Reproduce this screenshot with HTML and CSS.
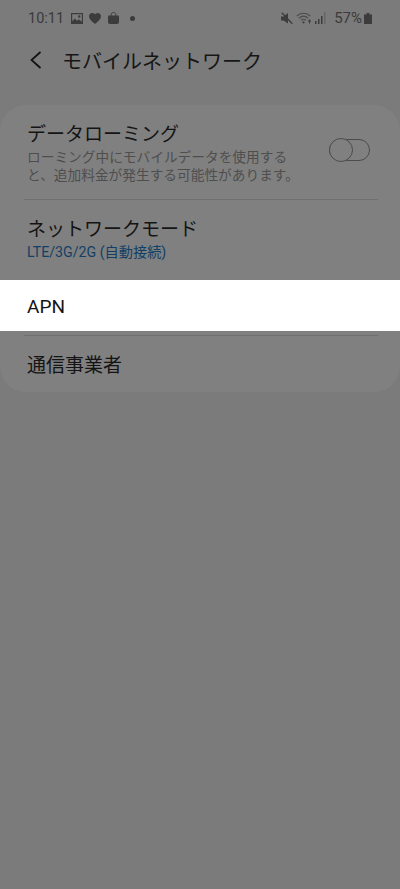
FILE: index.html
```html
<!DOCTYPE html>
<html lang="ja">
<head>
<meta charset="utf-8">
<title>モバイルネットワーク</title>
<link rel="stylesheet" href="styles.css">
</head>
<body>
<div class="status">
  <span class="time">10:11</span>
  <svg class="ic pic" viewBox="0 0 12 11"><path fill="#3c3c3c" fill-rule="evenodd" d="M0 0h12v11H0zM1.2 1.2v7l2.6-2.7 2.2 2.2 1.6-1.4 3.2 2.4V1.200zM8.300 2.300a1.200 1.200 0 1 1 0 2.400 1.200 1.200 0 0 1 0-2.400z"/></svg>
  <svg class="ic heart" viewBox="0 0 12 11"><path fill="#3c3c3c" d="M6 11C2.500 8.100 0 6 0 3.200 0 1.300 1.400 0 3.200 0 4.300 0 5.400.5 6 1.500 6.600.5 7.700 0 8.800 0 10.600 0 12 1.300 12 3.200 12 6 9.500 8.100 6 11z"/></svg>
  <svg class="ic bag" viewBox="0 0 11 12"><path fill="#3c3c3c" d="M1 3.500h9c.6 0 1 .4 1 1V10c0 1.200-.8 2-2 2H2c-1.200 0-2-.8-2-2V4.500c0-.6.400-1 1-1z"/><path fill="none" stroke="#3c3c3c" stroke-width="1" d="M3.200 4V2.500C3.200 1.200 4.200.5 5.500.5s2.300.7 2.300 2V4"/></svg>
  <span class="dot"></span>
  <span class="spacer"></span>
  <svg class="ic mute" viewBox="0 0 12 13"><path fill="#3c3c3c" d="M0 4.500h2.500L7 1v10.500L2.500 8.500H0z"/><path stroke="#3c3c3c" stroke-width="1.300" d="M.8.800l10.500 11"/></svg>
  <svg class="ic wifi" viewBox="0 0 16 12"><g fill="none" stroke="#4a4a4a" stroke-width="1.100"><path d="M.7 4.200C4.500.3 10.500.3 14.300 4.200"/><path d="M2.900 6.300c2.800-2.600 6.400-2.600 9.200 0"/><path d="M5 8.300c1.600-1.400 3.400-1.400 5 0"/></g><circle cx="7.500" cy="10.300" r="1.100" fill="#3c3c3c"/><path stroke="#3c3c3c" d="M13.500 8v3.500M12.200 9.200l1.300-1.200 1.300 1.200"/></svg>
  <svg class="ic signal" viewBox="0 0 11 12"><path fill="#3c3c3c" d="M0 9h1.500v3H0zM3 7h1.500v5H3zM6 4h1.500v8H6z"/><path fill="#666" d="M9 0h1.500v12H9z"/></svg>
  <span class="pct">57%</span>
  <svg class="ic batt" viewBox="0 0 8 11"><path fill="#3c3c3c" d="M2.500 0h3v1.500h-3zM0 1.500h8V11H0z"/></svg>
</div>
<header class="bar">
  <svg class="back" viewBox="0 0 12 18"><path fill="none" stroke="#111" stroke-width="1.700" d="M11 1L2 9l9 8"/></svg>
  <h1 class="title">モバイルネットワーク</h1>
</header>
<section class="card">
  <div class="row roaming">
    <div class="rtext">
      <div class="name">データローミング</div>
      <div class="desc">ローミング中にモバイルデータを使用すると、追加料金が発生する可能性があります。</div>
    </div>
    <div class="switch"><span class="knob"></span></div>
  </div>
  <div class="rule"></div>
  <div class="row mode">
    <div class="name">ネットワークモード</div>
    <div class="val">LTE/3G/2G (自動接続)</div>
  </div>
  <div class="row apn"><div class="name">APN</div></div>
  <div class="rule gap"></div>
  <div class="row carrier"><div class="name">通信事業者</div></div>
</section>
</body>
</html>
```
FILE: styles.css
```css
* { box-sizing: border-box; }
html, body { margin: 0; height: 100%; }
body {
  background: #7b7b7b;
  font-family: Roboto, "Noto Sans CJK JP", sans-serif;
  color: #111;
  overflow: hidden;
}
.status {
  height: 36px;
  padding: 0 28px;
  display: flex;
  align-items: center;
  color: #3a3a3a;
}
.time { font-size: 14.500px; width: 43px; }
.pct { font-size: 15px; margin-left: 8px; margin-right: 2px; }
.spacer { flex: 1; }
.ic { display: block; flex: none; }
.pic { width: 12px; height: 11px; }
.heart { width: 12px; height: 11px; margin-left: 6px; }
.bag { width: 11px; height: 12px; margin-left: 7px; }
.dot { width: 5px; height: 5px; border-radius: 50%; background: #3c3c3c; margin-left: 11px; }
.mute { width: 12px; height: 13px; }
.wifi { width: 16px; height: 12px; margin-left: 3px; }
.signal { width: 11px; height: 12px; margin-left: 3px; }
.batt { width: 8px; height: 11px; }
.bar {
  height: 48px;
  padding-left: 29px;
  display: flex;
  align-items: center;
}
.back { width: 13px; height: 18px; flex: none; }
.title { margin: 0 0 0 20px; font-size: 20px; font-weight: 400; color: #161616; }
.card {
  margin-top: 21px;
  background: #808080;
  border-radius: 26px;
  height: 287px;
}
.row { padding: 0 27px; }
.roaming {
  height: 94px;
  display: flex;
  align-items: flex-start;
  padding-top: 18px;
  padding-right: 30px;
}
.rtext { width: 272px; flex: none; }
.name { font-size: 19px; line-height: 24px; color: #141414; }
.desc { font-size: 13.700px; line-height: 18px; color: #4e4e4e; margin-top: 1px; }
.switch {
  position: relative;
  width: 41px;
  height: 22px;
  margin: 16px 0 0 30px;
  border: 1.300px solid #4c4c4c;
  border-radius: 11px;
}
.knob {
  position: absolute;
  left: -1.300px;
  top: -1.300px;
  width: 24px;
  height: 24px;
  margin-top: -1px;
  border: 1.300px solid #4c4c4c;
  border-radius: 50%;
  background: #808080;
}
.rule { height: 1px; margin: 0 22px 0 24px; background: #6f6f6f; }
.rule.gap { margin-top: 4px; }
.mode { height: 80px; padding-top: 18px; }
.val { font-size: 14.200px; line-height: 18px; color: #123f66; margin-top: 1px; }
.apn {
  height: 51px;
  padding-top: 2px;
  background: #fff;
  display: flex;
  align-items: center;
}
.carrier { padding-top: 18px; }
```
